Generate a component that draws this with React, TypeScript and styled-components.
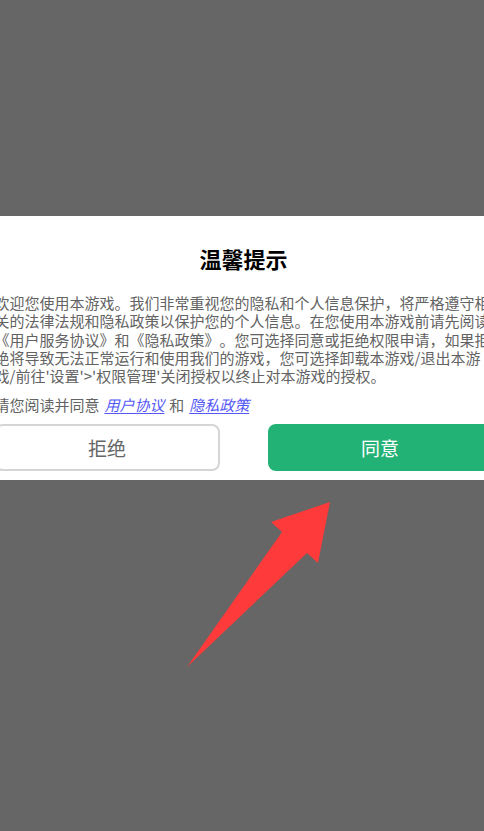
import React from "react";
import styled, { createGlobalStyle } from "styled-components";

const GlobalStyle = createGlobalStyle`
  html, body {
    margin: 0;
    padding: 0;
    background: #666666;
    overflow: hidden;
  }
  * { box-sizing: border-box; }
`;

const Screen = styled.div`
  position: relative;
  height: 831px;
  background: #666666;
  display: flex;
  flex-direction: column;
  padding-top: 216px;
  font-family: "Noto Sans CJK SC", "Noto Sans", sans-serif;
  text-spacing-trim: space-all;
`;

const Dialog = styled.div`
  background: #ffffff;
  display: flex;
  justify-content: center;
  overflow: hidden;
  padding: 27px 0 9px;
`;

const Content = styled.div`
  flex: none;
  width: 498px;
  margin-left: 3px;
  display: flex;
  flex-direction: column;
`;

const Title = styled.h1`
  margin: 0;
  font-size: 22px;
  line-height: 30px;
  font-weight: 700;
  color: #000000;
  text-align: center;
`;

const Body = styled.p`
  margin: 21px 0 0;
  font-size: 15px;
  line-height: 18.3px;
  color: #636363;
  word-break: break-all;
  line-break: anywhere;
`;

const Agree = styled.p`
  margin: 9.5px 0 0;
  font-size: 15px;
  line-height: 20px;
  color: #636363;
  white-space: nowrap;
`;

const Link = styled.a`
  margin: 0 1.5px;
  color: #5458f7;
  font-style: italic;
  text-decoration: underline;
  text-underline-offset: 2px;
`;

const Actions = styled.div`
  margin-top: 9.5px;
  display: grid;
  grid-template-columns: 1fr 1fr;
  gap: 48px;
`;

const Button = styled.button<{ $primary?: boolean }>`
  height: 46.5px;
  border-radius: 8px;
  font-family: "Noto Sans CJK SC", "Noto Sans", sans-serif;
  font-size: 19px;
  line-height: 1;
  cursor: pointer;
  background: ${(p) => (p.$primary ? "#23b276" : "#ffffff")};
  color: ${(p) => (p.$primary ? "#ffffff" : "#666666")};
  border: ${(p) => (p.$primary ? "none" : "2px solid #d5d5d5")};
`;

const Arrow = styled.svg`
  position: absolute;
  left: 0;
  top: 0;
  pointer-events: none;
`;

export default function App() {
  return (
    <>
      <GlobalStyle />
      <Screen>
        <Dialog>
          <Content>
            <Title>温馨提示</Title>
            <Body>
              欢迎您使用本游戏。我们非常重视您的隐私和个人信息保护，将严格遵守相关的法律法规和隐私政策以保护您的个人信息。在您使用本游戏前请先阅读《用户服务协议》和《隐私政策》。您可选择同意或拒绝权限申请，如果拒绝将导致无法正常运行和使用我们的游戏，您可选择卸载本游戏/退出本游戏/前往'设置'&gt;'权限管理'关闭授权以终止对本游戏的授权。
            </Body>
            <Agree>
              请您阅读并同意 <Link>用户协议</Link> 和 <Link>隐私政策</Link>
            </Agree>
            <Actions>
              <Button>拒绝</Button>
              <Button $primary>同意</Button>
            </Actions>
          </Content>
        </Dialog>
        <Arrow width="484" height="831" viewBox="0 0 484 831">
          <polygon
            points="330,502 271,522 282,532 187,667 307,553 318,563"
            fill="#fe3a3a"
          />
        </Arrow>
      </Screen>
    </>
  );
}
